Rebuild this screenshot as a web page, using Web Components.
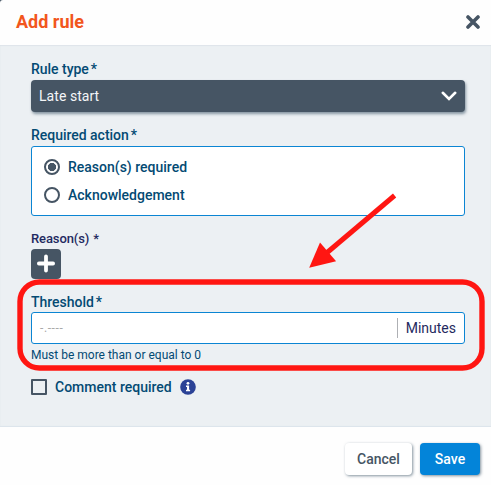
<!DOCTYPE html>
<html lang="en">
<head>
<meta charset="utf-8">
<title>Add rule</title>
<style>
    body {
        margin: 0;
        background: #465564;
        font-family: Roboto, "Liberation Sans", sans-serif;
    }
</style>
</head>
<body>

<rule-dialog heading="Add rule">
    <form-field label="Rule type">
        <select-box>Late start</select-box>
    </form-field>
    <form-field label="Required action">
        <radio-group>
            <radio-option checked>Reason(s) required</radio-option>
            <radio-option>Acknowledgement</radio-option>
        </radio-group>
    </form-field>
    <form-field class="reasons" label="Reason(s)">
        <add-button></add-button>
    </form-field>
    <form-field class="threshold" label="Threshold" hint="Must be more than or equal to 0">
        <unit-input placeholder="-.----">Minutes</unit-input>
    </form-field>
    <check-option>Comment required</check-option>
    <dialog-button slot="actions">Cancel</dialog-button>
    <dialog-button slot="actions" primary>Save</dialog-button>
</rule-dialog>
<callout-overlay></callout-overlay>

<script>
/** Base class: clones the markup held in the static `html` of each component */
class BaseElement extends HTMLElement {
    constructor() {
        super()
        const template = document.createElement('template')
        template.innerHTML = this.constructor.html
        this.attachShadow({ mode: 'open' })
            .append(template.content.cloneNode(true))
    }

    // Copy an attribute of the host into an element of the shadow root
    fill(selector, attr) {
        this.shadowRoot.querySelector(selector).textContent = this.getAttribute(attr) || ''
    }
}

class RuleDialog extends BaseElement {
    static html = `
        <style>
            :host {
                display: grid;
                grid-template-rows: 45px 382px 58px;
                width: 491px;
                height: 485px;
                border-top-left-radius: 3px;
                background: #fefefe;
                overflow: hidden;
            }
            header {
                display: flex;
                align-items: center;
                justify-content: space-between;
                padding: 0 11px 1px 16px;
            }
            h1 {
                margin: 0;
                font-size: 18px;
                line-height: 24px;
                font-weight: 700;
                color: #f2561d;
            }
            header svg { display: block; }
            main {
                box-sizing: border-box;
                padding: 15px 26px 0 31px;
                background: #ecf0f3;
                box-shadow: inset 0 1px 1px #dfe4ea, inset 0 -1px 1px #dce4ec;
            }
            footer {
                display: flex;
                justify-content: flex-end;
                gap: 8px;
                padding: 16px 11px 0 0;
            }
        </style>
        <header>
            <h1></h1>
            <svg width="14" height="14" viewBox="0 0 14 14" fill="none" stroke="#465564" stroke-width="3.6" stroke-linecap="round">
                <path d="M2 2 12 12M12 2 2 12"/>
            </svg>
        </header>
        <main><slot></slot></main>
        <footer><slot name="actions"></slot></footer>
    `

    connectedCallback() {
        this.fill('h1', 'heading')
    }
}

class FormField extends BaseElement {
    static html = `
        <style>
            :host {
                display: block;
                margin-bottom: 14px;
                color: #034a73;
            }
            :host(.reasons) { margin-bottom: 15px; color: #1f2a60; }
            .label {
                display: flex;
                gap: 2px;
                height: 20px;
                font-size: 14px;
                line-height: 19px;
                font-weight: 500;
                letter-spacing: -.02px;
            }
            :host(.reasons) .label {
                gap: 4px;
                height: 19px;
                font-size: 13px;
                line-height: 17px;
                letter-spacing: -.1px;
            }
            :host(.threshold) { margin-bottom: 16px; }
            :host(.threshold) .label { height: 18px; line-height: 16px; }
            .hint {
                font-size: 12px;
                line-height: 14px;
                padding: 4px 0 1px;
            }
            .hint:empty { display: none; }
        </style>
        <div class="label"><span class="text"></span><span>*</span></div>
        <slot></slot>
        <div class="hint"></div>
    `

    connectedCallback() {
        this.fill('.text', 'label')
        this.fill('.hint', 'hint')
    }
}

class SelectBox extends BaseElement {
    static html = `
        <style>
            :host {
                display: flex;
                align-items: center;
                justify-content: space-between;
                box-sizing: border-box;
                height: 32px;
                padding: 0 8px;
                border-radius: 4px;
                background: #465564;
                box-shadow: 1px 2px 3px rgba(50, 75, 95, .55);
                color: #f4f6f8;
                font-size: 14px;
                letter-spacing: .05px;
            }
        </style>
        <slot></slot>
        <svg width="16" height="10" viewBox="0 0 16 10" fill="none" stroke="#fff" stroke-width="2.6" stroke-linecap="round">
            <path d="M1.8 1.8 8 7.9 14.2 1.8"/>
        </svg>
    `
}

class RadioGroup extends BaseElement {
    static html = `
        <style>
            :host {
                display: flex;
                flex-direction: column;
                gap: 12px;
                box-sizing: border-box;
                height: 70px;
                padding: 12px;
                border: 1px solid #0b85d3;
                border-radius: 3px;
                background: #fff;
            }
        </style>
        <slot></slot>
    `
}

class RadioOption extends BaseElement {
    static html = `
        <style>
            :host {
                display: flex;
                align-items: center;
                gap: 8px;
                height: 16px;
                font-size: 14px;
                font-weight: 500;
            }
            i {
                box-sizing: border-box;
                width: 16px;
                height: 16px;
                border: 2px solid #465564;
                border-radius: 50%;
            }
            :host([checked]) i {
                background: radial-gradient(circle, #465564 3.8px, transparent 4.4px);
            }
        </style>
        <i></i><slot></slot>
    `
}

class AddButton extends BaseElement {
    static html = `
        <style>
            :host {
                display: grid;
                place-items: center;
                width: 30px;
                height: 30px;
                border-radius: 4px;
                background: #465564;
            }
        </style>
        <svg width="30" height="30" viewBox="0 0 30 30" stroke="#fff" stroke-width="3.8" stroke-linecap="round">
            <path d="M15 7.4V21.6M7.9 14.5H22.1"/>
        </svg>
    `
}

class UnitInput extends BaseElement {
    static html = `
        <style>
            :host {
                display: flex;
                align-items: center;
                box-sizing: border-box;
                height: 32px;
                padding: 0 8px;
                border: 1px solid #0b85d3;
                border-radius: 3px;
                background: #fff;
                font-size: 14px;
            }
            .placeholder {
                flex: 1;
                color: #a9a9a9;
                font-size: 12px;
                letter-spacing: .6px;
            }
            .unit {
                padding-left: 8px;
                border-left: 1px solid #aeb0b4;
                line-height: 20px;
                color: #1f2a60;
            }
        </style>
        <span class="placeholder"></span>
        <span class="unit"><slot></slot></span>
    `

    connectedCallback() {
        this.fill('.placeholder', 'placeholder')
    }
}

class CheckOption extends BaseElement {
    static html = `
        <style>
            :host {
                display: flex;
                align-items: center;
                gap: 8px;
                height: 16px;
                color: #034a73;
                font-size: 14px;
                font-weight: 500;
            }
            i {
                box-sizing: border-box;
                width: 16px;
                height: 16px;
                border: 2px solid #465564;
                border-radius: 1px;
            }
        </style>
        <i></i><slot></slot>
        <svg width="16" height="16" viewBox="0 0 16 16">
            <circle cx="8" cy="8" r="7.8" fill="#2b4296"/>
            <circle cx="8" cy="4.3" r="1.4" fill="#fff"/>
            <path d="M6 6.6H9.1V10.7H10.1V12.2H6V10.7H7V8.1H6Z" fill="#fff"/>
        </svg>
    `
}

class DialogButton extends BaseElement {
    static html = `
        <style>
            :host {
                display: grid;
                place-items: center;
                width: 67px;
                height: 32px;
                border-radius: 4px;
                background: #fff;
                box-shadow: 1px 1px 3px rgba(50, 75, 95, .6);
                color: #465564;
                font-size: 14px;
                font-weight: 500;
            }
            :host([primary]) {
                width: 60px;
                background: #0384d9;
                color: #fff;
            }
        </style>
        <slot></slot>
    `
}

/** Red frame and arrow that point out the threshold field */
class CalloutOverlay extends BaseElement {
    static html = `
        <style>
            :host {
                position: absolute;
                top: 0;
                left: 0;
                pointer-events: none;
            }
            svg { display: block; }
        </style>
        <svg width="491" height="485" viewBox="0 0 491 485">
            <rect x="20" y="282" width="462" height="86" rx="19.5" fill="none" stroke="#ff1612" stroke-width="5.4"/>
            <path d="M394.6 195.5 326 253.5" stroke="#ff1612" stroke-width="5"/>
            <path d="M309.2 267.8 320 242.6 336.1 261.2Z" fill="#ff1612"/>
        </svg>
    `
}

customElements.define('rule-dialog', RuleDialog)
customElements.define('form-field', FormField)
customElements.define('select-box', SelectBox)
customElements.define('radio-group', RadioGroup)
customElements.define('radio-option', RadioOption)
customElements.define('add-button', AddButton)
customElements.define('unit-input', UnitInput)
customElements.define('check-option', CheckOption)
customElements.define('dialog-button', DialogButton)
customElements.define('callout-overlay', CalloutOverlay)
</script>
</body>
</html>
